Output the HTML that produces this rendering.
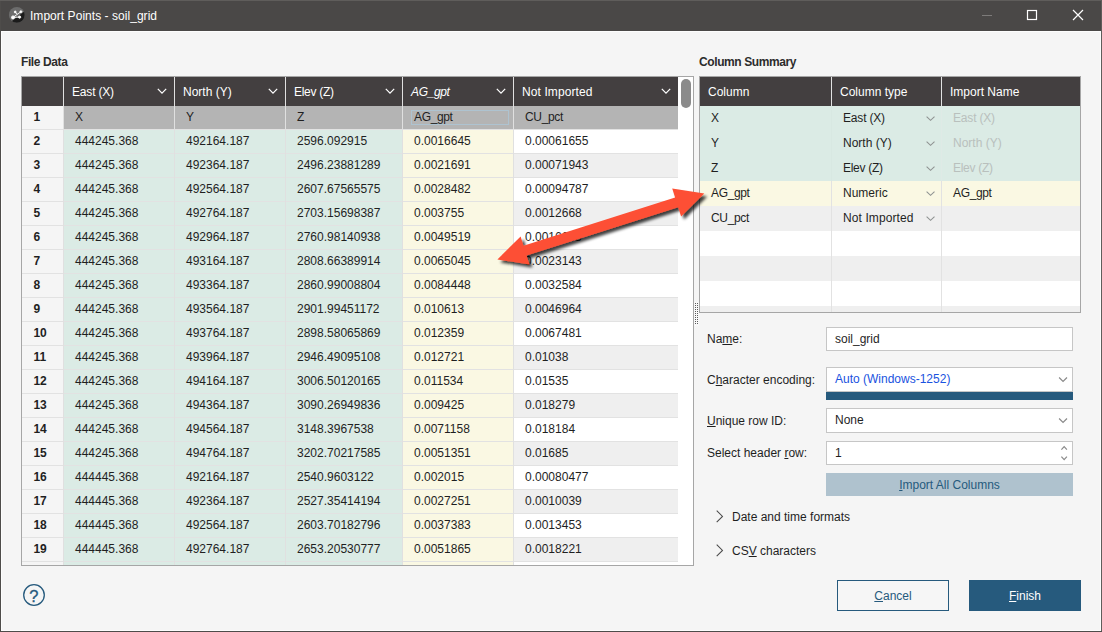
<!DOCTYPE html>
<html lang="en"><head><meta charset="utf-8"><title>Import Points - soil_grid</title>
<style>
*{box-sizing:border-box;margin:0;padding:0}
html,body{width:1102px;height:632px;overflow:hidden;background:#f5f5f5}
body{font-family:"Liberation Sans",sans-serif;font-size:12px;color:#1f1f1f;position:relative}
.abs,.abs>*{position:absolute}
#win{position:absolute;left:0;top:0;width:1102px;height:632px;background:#f5f5f5;overflow:hidden}
.bd{position:absolute;background:#5f5d5b}
#title{position:absolute;left:0;top:0;width:1102px;height:31px;background:#4a4847;color:#fff}
#title .t{position:absolute;left:30px;top:8px;font-size:12px;line-height:16px;white-space:nowrap;letter-spacing:0.04px}
.lbl{position:absolute;white-space:nowrap;line-height:16px}
.b{font-weight:bold}
.hb{letter-spacing:-0.4px;color:#2c2c2c}
#lt{position:absolute;left:21px;top:76px;width:673px;height:490px;border:1px solid #a6a6a6;background:#fff;overflow:hidden}
#rt{position:absolute;left:699px;top:76px;width:382px;height:237px;border:1px solid #a6a6a6;background:#fff;overflow:hidden}
.hd{position:absolute;background:#433f40;color:#fff}
.c{position:absolute;white-space:nowrap;overflow:hidden;line-height:23px;height:24px;border-bottom:1px solid #e2e2e2}
.v{position:absolute;width:1px;background:#e0e0e0}
.chev{position:absolute}
</style></head><body>
<div id="win">
<div id="title">
<svg style="position:absolute;left:8px;top:6px" width="18" height="18" viewBox="0 0 18 18"><defs><clipPath id="cc"><circle cx="8.8" cy="8.9" r="7.9"/></clipPath></defs><circle cx="8.8" cy="8.9" r="7.9" fill="#6c6c6c"/><path d="M2 16.5L19 3.5V19H2Z" fill="#1b1b1b" clip-path="url(#cc)"/><g stroke="#fff" stroke-width="0.9" fill="#fff"><path d="M5 11.4L12.9 5.7M5 11.4L11.6 11.1M7.2 6L9.3 8.3" fill="none"/><circle cx="5" cy="11.4" r="1.5"/><circle cx="11.6" cy="11.1" r="1.15"/><circle cx="12.9" cy="5.7" r="0.95"/><circle cx="7.2" cy="6" r="0.95"/></g></svg>
<div class="t">Import Points - soil_grid</div>
<svg style="position:absolute;left:975px;top:0" width="127" height="31" viewBox="0 0 127 31" fill="none"><path d="M7 15.5H17" stroke="#7d7b7a" stroke-width="1"/><rect x="52.5" y="10.5" width="9" height="9" stroke="#fff" stroke-width="1.2"/><path d="M98 10L108 20M108 10L98 20" stroke="#fff" stroke-width="1.2"/></svg>
</div>
<div class="lbl b hb" style="left:21px;top:54px">File Data</div>
<div class="lbl b hb" style="left:699px;top:54px">Column Summary</div>
<div id="lt">
<div class="hd" style="left:0;top:0;width:656px;height:29px"></div>
<div class="lbl" style="left:50px;top:7px;color:#fff;letter-spacing:-0.18px;">East (X)</div>
<svg class="chev" style="left:135.0px;top:11.4px" width="10" height="6" viewBox="0 0 10 6" fill="none"><path d="M0.8 0.9L5 5.1L9.2 0.9" stroke="#fff" stroke-width="1.25"/></svg>
<div class="lbl" style="left:161px;top:7px;color:#fff;">North (Y)</div>
<svg class="chev" style="left:246.0px;top:11.4px" width="10" height="6" viewBox="0 0 10 6" fill="none"><path d="M0.8 0.9L5 5.1L9.2 0.9" stroke="#fff" stroke-width="1.25"/></svg>
<div class="lbl" style="left:272px;top:7px;color:#fff;letter-spacing:-0.28px;">Elev (Z)</div>
<svg class="chev" style="left:363.0px;top:11.4px" width="10" height="6" viewBox="0 0 10 6" fill="none"><path d="M0.8 0.9L5 5.1L9.2 0.9" stroke="#fff" stroke-width="1.25"/></svg>
<div class="lbl" style="left:389px;top:7px;color:#fff;font-style:italic;letter-spacing:-0.35px;">AG_gpt</div>
<svg class="chev" style="left:474.0px;top:11.4px" width="10" height="6" viewBox="0 0 10 6" fill="none"><path d="M0.8 0.9L5 5.1L9.2 0.9" stroke="#fff" stroke-width="1.25"/></svg>
<div class="lbl" style="left:500px;top:7px;color:#fff;letter-spacing:0.1px;">Not Imported</div>
<svg class="chev" style="left:639.0px;top:11.4px" width="10" height="6" viewBox="0 0 10 6" fill="none"><path d="M0.8 0.9L5 5.1L9.2 0.9" stroke="#fff" stroke-width="1.25"/></svg>
<div class="c b" style="left:0;top:29px;width:42px;background:#f5f5f5;padding-left:11.4px">1</div>
<div class="c" style="left:42px;top:29px;width:111px;background:#b4b4b4;padding-left:11px;">X</div>
<div class="c" style="left:153px;top:29px;width:111px;background:#b4b4b4;padding-left:11px;">Y</div>
<div class="c" style="left:264px;top:29px;width:117px;background:#b4b4b4;padding-left:11px;">Z</div>
<div class="c" style="left:381px;top:29px;width:111px;background:#b4b4b4;padding-left:11px;letter-spacing:-0.35px;">AG_gpt</div>
<div class="c" style="left:492px;top:29px;width:164px;background:#b4b4b4;padding-left:11px;letter-spacing:-0.35px;">CU_pct</div>
<div class="c b" style="left:0;top:53px;width:42px;background:#f5f5f5;padding-left:11.4px">2</div>
<div class="c" style="left:42px;top:53px;width:111px;background:#dbebe5;padding-left:11px;">444245.368</div>
<div class="c" style="left:153px;top:53px;width:111px;background:#dbebe5;padding-left:11px;">492164.187</div>
<div class="c" style="left:264px;top:53px;width:117px;background:#dbebe5;padding-left:11px;">2596.092915</div>
<div class="c" style="left:381px;top:53px;width:111px;background:#faf8e3;padding-left:11px;">0.0016645</div>
<div class="c" style="left:492px;top:53px;width:164px;background:#ffffff;padding-left:11px;">0.00061655</div>
<div class="c b" style="left:0;top:77px;width:42px;background:#f5f5f5;padding-left:11.4px">3</div>
<div class="c" style="left:42px;top:77px;width:111px;background:#dbebe5;padding-left:11px;">444245.368</div>
<div class="c" style="left:153px;top:77px;width:111px;background:#dbebe5;padding-left:11px;">492364.187</div>
<div class="c" style="left:264px;top:77px;width:117px;background:#dbebe5;padding-left:11px;">2496.23881289</div>
<div class="c" style="left:381px;top:77px;width:111px;background:#faf8e3;padding-left:11px;">0.0021691</div>
<div class="c" style="left:492px;top:77px;width:164px;background:#efefef;padding-left:11px;">0.00071943</div>
<div class="c b" style="left:0;top:101px;width:42px;background:#f5f5f5;padding-left:11.4px">4</div>
<div class="c" style="left:42px;top:101px;width:111px;background:#dbebe5;padding-left:11px;">444245.368</div>
<div class="c" style="left:153px;top:101px;width:111px;background:#dbebe5;padding-left:11px;">492564.187</div>
<div class="c" style="left:264px;top:101px;width:117px;background:#dbebe5;padding-left:11px;">2607.67565575</div>
<div class="c" style="left:381px;top:101px;width:111px;background:#faf8e3;padding-left:11px;">0.0028482</div>
<div class="c" style="left:492px;top:101px;width:164px;background:#ffffff;padding-left:11px;">0.00094787</div>
<div class="c b" style="left:0;top:125px;width:42px;background:#f5f5f5;padding-left:11.4px">5</div>
<div class="c" style="left:42px;top:125px;width:111px;background:#dbebe5;padding-left:11px;">444245.368</div>
<div class="c" style="left:153px;top:125px;width:111px;background:#dbebe5;padding-left:11px;">492764.187</div>
<div class="c" style="left:264px;top:125px;width:117px;background:#dbebe5;padding-left:11px;">2703.15698387</div>
<div class="c" style="left:381px;top:125px;width:111px;background:#faf8e3;padding-left:11px;">0.003755</div>
<div class="c" style="left:492px;top:125px;width:164px;background:#efefef;padding-left:11px;">0.0012668</div>
<div class="c b" style="left:0;top:149px;width:42px;background:#f5f5f5;padding-left:11.4px">6</div>
<div class="c" style="left:42px;top:149px;width:111px;background:#dbebe5;padding-left:11px;">444245.368</div>
<div class="c" style="left:153px;top:149px;width:111px;background:#dbebe5;padding-left:11px;">492964.187</div>
<div class="c" style="left:264px;top:149px;width:117px;background:#dbebe5;padding-left:11px;">2760.98140938</div>
<div class="c" style="left:381px;top:149px;width:111px;background:#faf8e3;padding-left:11px;">0.0049519</div>
<div class="c" style="left:492px;top:149px;width:164px;background:#ffffff;padding-left:11px;">0.0016648</div>
<div class="c b" style="left:0;top:173px;width:42px;background:#f5f5f5;padding-left:11.4px">7</div>
<div class="c" style="left:42px;top:173px;width:111px;background:#dbebe5;padding-left:11px;">444245.368</div>
<div class="c" style="left:153px;top:173px;width:111px;background:#dbebe5;padding-left:11px;">493164.187</div>
<div class="c" style="left:264px;top:173px;width:117px;background:#dbebe5;padding-left:11px;">2808.66389914</div>
<div class="c" style="left:381px;top:173px;width:111px;background:#faf8e3;padding-left:11px;">0.0065045</div>
<div class="c" style="left:492px;top:173px;width:164px;background:#efefef;padding-left:11px;">0.0023143</div>
<div class="c b" style="left:0;top:197px;width:42px;background:#f5f5f5;padding-left:11.4px">8</div>
<div class="c" style="left:42px;top:197px;width:111px;background:#dbebe5;padding-left:11px;">444245.368</div>
<div class="c" style="left:153px;top:197px;width:111px;background:#dbebe5;padding-left:11px;">493364.187</div>
<div class="c" style="left:264px;top:197px;width:117px;background:#dbebe5;padding-left:11px;">2860.99008804</div>
<div class="c" style="left:381px;top:197px;width:111px;background:#faf8e3;padding-left:11px;">0.0084448</div>
<div class="c" style="left:492px;top:197px;width:164px;background:#ffffff;padding-left:11px;">0.0032584</div>
<div class="c b" style="left:0;top:221px;width:42px;background:#f5f5f5;padding-left:11.4px">9</div>
<div class="c" style="left:42px;top:221px;width:111px;background:#dbebe5;padding-left:11px;">444245.368</div>
<div class="c" style="left:153px;top:221px;width:111px;background:#dbebe5;padding-left:11px;">493564.187</div>
<div class="c" style="left:264px;top:221px;width:117px;background:#dbebe5;padding-left:11px;">2901.99451172</div>
<div class="c" style="left:381px;top:221px;width:111px;background:#faf8e3;padding-left:11px;">0.010613</div>
<div class="c" style="left:492px;top:221px;width:164px;background:#efefef;padding-left:11px;">0.0046964</div>
<div class="c b" style="left:0;top:245px;width:42px;background:#f5f5f5;padding-left:11.4px">10</div>
<div class="c" style="left:42px;top:245px;width:111px;background:#dbebe5;padding-left:11px;">444245.368</div>
<div class="c" style="left:153px;top:245px;width:111px;background:#dbebe5;padding-left:11px;">493764.187</div>
<div class="c" style="left:264px;top:245px;width:117px;background:#dbebe5;padding-left:11px;">2898.58065869</div>
<div class="c" style="left:381px;top:245px;width:111px;background:#faf8e3;padding-left:11px;">0.012359</div>
<div class="c" style="left:492px;top:245px;width:164px;background:#ffffff;padding-left:11px;">0.0067481</div>
<div class="c b" style="left:0;top:269px;width:42px;background:#f5f5f5;padding-left:11.4px">11</div>
<div class="c" style="left:42px;top:269px;width:111px;background:#dbebe5;padding-left:11px;">444245.368</div>
<div class="c" style="left:153px;top:269px;width:111px;background:#dbebe5;padding-left:11px;">493964.187</div>
<div class="c" style="left:264px;top:269px;width:117px;background:#dbebe5;padding-left:11px;">2946.49095108</div>
<div class="c" style="left:381px;top:269px;width:111px;background:#faf8e3;padding-left:11px;">0.012721</div>
<div class="c" style="left:492px;top:269px;width:164px;background:#efefef;padding-left:11px;">0.01038</div>
<div class="c b" style="left:0;top:293px;width:42px;background:#f5f5f5;padding-left:11.4px">12</div>
<div class="c" style="left:42px;top:293px;width:111px;background:#dbebe5;padding-left:11px;">444245.368</div>
<div class="c" style="left:153px;top:293px;width:111px;background:#dbebe5;padding-left:11px;">494164.187</div>
<div class="c" style="left:264px;top:293px;width:117px;background:#dbebe5;padding-left:11px;">3006.50120165</div>
<div class="c" style="left:381px;top:293px;width:111px;background:#faf8e3;padding-left:11px;">0.011534</div>
<div class="c" style="left:492px;top:293px;width:164px;background:#ffffff;padding-left:11px;">0.01535</div>
<div class="c b" style="left:0;top:317px;width:42px;background:#f5f5f5;padding-left:11.4px">13</div>
<div class="c" style="left:42px;top:317px;width:111px;background:#dbebe5;padding-left:11px;">444245.368</div>
<div class="c" style="left:153px;top:317px;width:111px;background:#dbebe5;padding-left:11px;">494364.187</div>
<div class="c" style="left:264px;top:317px;width:117px;background:#dbebe5;padding-left:11px;">3090.26949836</div>
<div class="c" style="left:381px;top:317px;width:111px;background:#faf8e3;padding-left:11px;">0.009425</div>
<div class="c" style="left:492px;top:317px;width:164px;background:#efefef;padding-left:11px;">0.018279</div>
<div class="c b" style="left:0;top:341px;width:42px;background:#f5f5f5;padding-left:11.4px">14</div>
<div class="c" style="left:42px;top:341px;width:111px;background:#dbebe5;padding-left:11px;">444245.368</div>
<div class="c" style="left:153px;top:341px;width:111px;background:#dbebe5;padding-left:11px;">494564.187</div>
<div class="c" style="left:264px;top:341px;width:117px;background:#dbebe5;padding-left:11px;">3148.3967538</div>
<div class="c" style="left:381px;top:341px;width:111px;background:#faf8e3;padding-left:11px;">0.0071158</div>
<div class="c" style="left:492px;top:341px;width:164px;background:#ffffff;padding-left:11px;">0.018184</div>
<div class="c b" style="left:0;top:365px;width:42px;background:#f5f5f5;padding-left:11.4px">15</div>
<div class="c" style="left:42px;top:365px;width:111px;background:#dbebe5;padding-left:11px;">444245.368</div>
<div class="c" style="left:153px;top:365px;width:111px;background:#dbebe5;padding-left:11px;">494764.187</div>
<div class="c" style="left:264px;top:365px;width:117px;background:#dbebe5;padding-left:11px;">3202.70217585</div>
<div class="c" style="left:381px;top:365px;width:111px;background:#faf8e3;padding-left:11px;">0.0051351</div>
<div class="c" style="left:492px;top:365px;width:164px;background:#efefef;padding-left:11px;">0.01685</div>
<div class="c b" style="left:0;top:389px;width:42px;background:#f5f5f5;padding-left:11.4px">16</div>
<div class="c" style="left:42px;top:389px;width:111px;background:#dbebe5;padding-left:11px;">444445.368</div>
<div class="c" style="left:153px;top:389px;width:111px;background:#dbebe5;padding-left:11px;">492164.187</div>
<div class="c" style="left:264px;top:389px;width:117px;background:#dbebe5;padding-left:11px;">2540.9603122</div>
<div class="c" style="left:381px;top:389px;width:111px;background:#faf8e3;padding-left:11px;">0.002015</div>
<div class="c" style="left:492px;top:389px;width:164px;background:#ffffff;padding-left:11px;">0.00080477</div>
<div class="c b" style="left:0;top:413px;width:42px;background:#f5f5f5;padding-left:11.4px">17</div>
<div class="c" style="left:42px;top:413px;width:111px;background:#dbebe5;padding-left:11px;">444445.368</div>
<div class="c" style="left:153px;top:413px;width:111px;background:#dbebe5;padding-left:11px;">492364.187</div>
<div class="c" style="left:264px;top:413px;width:117px;background:#dbebe5;padding-left:11px;">2527.35414194</div>
<div class="c" style="left:381px;top:413px;width:111px;background:#faf8e3;padding-left:11px;">0.0027251</div>
<div class="c" style="left:492px;top:413px;width:164px;background:#efefef;padding-left:11px;">0.0010039</div>
<div class="c b" style="left:0;top:437px;width:42px;background:#f5f5f5;padding-left:11.4px">18</div>
<div class="c" style="left:42px;top:437px;width:111px;background:#dbebe5;padding-left:11px;">444445.368</div>
<div class="c" style="left:153px;top:437px;width:111px;background:#dbebe5;padding-left:11px;">492564.187</div>
<div class="c" style="left:264px;top:437px;width:117px;background:#dbebe5;padding-left:11px;">2603.70182796</div>
<div class="c" style="left:381px;top:437px;width:111px;background:#faf8e3;padding-left:11px;">0.0037383</div>
<div class="c" style="left:492px;top:437px;width:164px;background:#ffffff;padding-left:11px;">0.0013453</div>
<div class="c b" style="left:0;top:461px;width:42px;background:#f5f5f5;padding-left:11.4px">19</div>
<div class="c" style="left:42px;top:461px;width:111px;background:#dbebe5;padding-left:11px;">444445.368</div>
<div class="c" style="left:153px;top:461px;width:111px;background:#dbebe5;padding-left:11px;">492764.187</div>
<div class="c" style="left:264px;top:461px;width:117px;background:#dbebe5;padding-left:11px;">2653.20530777</div>
<div class="c" style="left:381px;top:461px;width:111px;background:#faf8e3;padding-left:11px;">0.0051865</div>
<div class="c" style="left:492px;top:461px;width:164px;background:#efefef;padding-left:11px;">0.0018221</div>
<div class="c b" style="left:0;top:485px;width:42px;background:#f5f5f5;padding-left:11.4px"></div>
<div class="c" style="left:42px;top:485px;width:111px;background:#dbebe5;padding-left:11px;"></div>
<div class="c" style="left:153px;top:485px;width:111px;background:#dbebe5;padding-left:11px;"></div>
<div class="c" style="left:264px;top:485px;width:117px;background:#dbebe5;padding-left:11px;"></div>
<div class="c" style="left:381px;top:485px;width:111px;background:#faf8e3;padding-left:11px;"></div>
<div class="c" style="left:492px;top:485px;width:164px;background:#ffffff;padding-left:11px;"></div>
<div class="v" style="left:41px;top:0;height:500px"></div>
<div class="v" style="left:152px;top:0;height:500px"></div>
<div class="v" style="left:263px;top:0;height:500px"></div>
<div class="v" style="left:380px;top:0;height:500px"></div>
<div class="v" style="left:491px;top:0;height:500px"></div>
<div style="position:absolute;left:389px;top:33px;width:98px;height:15px;border:1px solid #aec3d0"></div>
<div style="position:absolute;left:656px;top:0;width:15px;height:500px;background:#fff"></div>
<div style="position:absolute;left:659px;top:2px;width:10px;height:29px;border-radius:5px;background:#8b8b8b"></div>
</div>
<div id="rt">
<div class="hd" style="left:0;top:0;width:380px;height:29px"></div>
<div class="lbl" style="left:8px;top:7px;color:#fff">Column</div>
<div class="lbl" style="left:140px;top:7px;color:#fff">Column type</div>
<div class="lbl" style="left:250px;top:7px;color:#fff">Import Name</div>
<div style="position:absolute;left:0;top:29px;width:380px;height:25px;background:#dbebe5"></div>
<div class="lbl" style="left:11px;top:33px;">X</div>
<div class="lbl" style="left:143px;top:33px;letter-spacing:-0.18px;">East (X)</div>
<svg class="chev" style="left:225px;top:38px" width="11" height="7" viewBox="0 0 11 7" fill="none"><path d="M1.6 1.6L5.55 5.3L9.5 1.6" stroke="#8f9392" stroke-width="1.1"/></svg>
<div class="lbl" style="left:253px;top:33px;color:#b9c0bd;letter-spacing:-0.18px;">East (X)</div>
<div style="position:absolute;left:0;top:54px;width:380px;height:25px;background:#dbebe5"></div>
<div class="lbl" style="left:11px;top:58px;">Y</div>
<div class="lbl" style="left:143px;top:58px;">North (Y)</div>
<svg class="chev" style="left:225px;top:63px" width="11" height="7" viewBox="0 0 11 7" fill="none"><path d="M1.6 1.6L5.55 5.3L9.5 1.6" stroke="#8f9392" stroke-width="1.1"/></svg>
<div class="lbl" style="left:253px;top:58px;color:#b9c0bd;">North (Y)</div>
<div style="position:absolute;left:0;top:79px;width:380px;height:25px;background:#dbebe5"></div>
<div class="lbl" style="left:11px;top:83px;">Z</div>
<div class="lbl" style="left:143px;top:83px;letter-spacing:-0.28px;">Elev (Z)</div>
<svg class="chev" style="left:225px;top:88px" width="11" height="7" viewBox="0 0 11 7" fill="none"><path d="M1.6 1.6L5.55 5.3L9.5 1.6" stroke="#8f9392" stroke-width="1.1"/></svg>
<div class="lbl" style="left:253px;top:83px;color:#b9c0bd;letter-spacing:-0.28px;">Elev (Z)</div>
<div style="position:absolute;left:0;top:104px;width:380px;height:25px;background:#faf8e3"></div>
<div class="lbl" style="left:11px;top:108px;letter-spacing:-0.35px;">AG_gpt</div>
<div class="lbl" style="left:143px;top:108px;">Numeric</div>
<svg class="chev" style="left:225px;top:113px" width="11" height="7" viewBox="0 0 11 7" fill="none"><path d="M1.6 1.6L5.55 5.3L9.5 1.6" stroke="#8f9392" stroke-width="1.1"/></svg>
<div class="lbl" style="left:253px;top:108px;color:#1f1f1f;letter-spacing:-0.35px;">AG_gpt</div>
<div style="position:absolute;left:0;top:129px;width:380px;height:25px;background:#efefef"></div>
<div class="lbl" style="left:11px;top:133px;letter-spacing:-0.35px;">CU_pct</div>
<div class="lbl" style="left:143px;top:133px;letter-spacing:0.1px;">Not Imported</div>
<svg class="chev" style="left:225px;top:138px" width="11" height="7" viewBox="0 0 11 7" fill="none"><path d="M1.6 1.6L5.55 5.3L9.5 1.6" stroke="#8f9392" stroke-width="1.1"/></svg>
<div style="position:absolute;left:0;top:154px;width:380px;height:25px;background:#ffffff"></div>
<div style="position:absolute;left:0;top:179px;width:380px;height:25px;background:#efefef"></div>
<div style="position:absolute;left:0;top:204px;width:380px;height:25px;background:#ffffff"></div>
<div style="position:absolute;left:0;top:229px;width:380px;height:25px;background:#efefef"></div>
<div class="v" style="left:131px;top:0;height:300px;background:#e2e2e2"></div>
<div class="v" style="left:131px;top:29px;height:75px;background:#d8e8e2"></div>
<div class="v" style="left:241px;top:0;height:300px;background:#e2e2e2"></div>
<div class="v" style="left:241px;top:29px;height:75px;background:#dfeae6"></div>
</div>
<svg style="position:absolute;left:694px;top:302px" width="5" height="24" viewBox="0 0 5 24" shape-rendering="crispEdges"><rect x="0" y="0" width="5" height="24" fill="#f9f9f9"/><g fill="#5c5c5c"><rect x="1" y="1" width="1" height="1"/><rect x="3" y="1" width="1" height="1"/><rect x="1" y="3" width="1" height="1"/><rect x="3" y="3" width="1" height="1"/><rect x="1" y="5" width="1" height="1"/><rect x="3" y="5" width="1" height="1"/><rect x="1" y="7" width="1" height="1"/><rect x="3" y="7" width="1" height="1"/><rect x="1" y="9" width="1" height="1"/><rect x="3" y="9" width="1" height="1"/><rect x="1" y="11" width="1" height="1"/><rect x="3" y="11" width="1" height="1"/><rect x="1" y="13" width="1" height="1"/><rect x="3" y="13" width="1" height="1"/><rect x="1" y="15" width="1" height="1"/><rect x="3" y="15" width="1" height="1"/><rect x="1" y="17" width="1" height="1"/><rect x="3" y="17" width="1" height="1"/><rect x="1" y="19" width="1" height="1"/><rect x="3" y="19" width="1" height="1"/><rect x="1" y="21" width="1" height="1"/><rect x="3" y="21" width="1" height="1"/></g></svg>
<div class="lbl" style="left:707px;top:331px">Na<u>m</u>e:</div>
<div style="position:absolute;left:826px;top:327px;width:247px;height:24px;background:#fff;border:1px solid #c6c6c6;"><div class="lbl" style="left:8px;top:3px;color:#1f1f1f">soil_grid</div></div>
<div class="lbl" style="left:707px;top:372px">C<u>h</u>aracter encoding:</div>
<div style="position:absolute;left:826px;top:367px;width:247px;height:25px;background:#fff;border:1px solid #c6c6c6;"><div class="lbl" style="left:8px;top:3px;color:#1a53e0">Auto (Windows-1252)</div></div>
<div style="position:absolute;left:826px;top:392px;width:247px;height:8px;background:#265a7d"></div>
<div class="lbl" style="left:707px;top:413px"><u>U</u>nique row ID:</div>
<div style="position:absolute;left:826px;top:408px;width:247px;height:25px;background:#fff;border:1px solid #c6c6c6;"><div class="lbl" style="left:8px;top:3px;color:#1f1f1f">None</div></div>
<div class="lbl" style="left:707px;top:445px">Select header <u>r</u>ow:</div>
<div style="position:absolute;left:826px;top:441px;width:247px;height:24px;background:#fff;border:1px solid #c6c6c6;"><div class="lbl" style="left:8px;top:3px;color:#1f1f1f">1</div></div>
<svg class="chev" style="left:1058.3px;top:377px" width="11" height="7" viewBox="0 0 11 7" fill="none"><path d="M1.1 0.5L5.05 4.5L9 0.5" stroke="#8a8a8a" stroke-width="1.2"/></svg>
<svg class="chev" style="left:1058.3px;top:418px" width="11" height="7" viewBox="0 0 11 7" fill="none"><path d="M1.1 0.5L5.05 4.5L9 0.5" stroke="#8a8a8a" stroke-width="1.2"/></svg>
<svg class="chev" style="left:1058px;top:445px" width="12" height="17" viewBox="0 0 12 17" fill="none"><path d="M3.4 4.7L6.15 1.7L8.9 4.7M3.4 11.7L6.15 14.7L8.9 11.7" stroke="#8a8a8a" stroke-width="1.2"/></svg>
<div style="position:absolute;left:826px;top:473px;width:247px;height:23px;background:#afc2ce;color:#265a7d;text-align:center;line-height:25px"><u>I</u>mport All Columns</div>
<svg class="chev" style="left:716.2px;top:510.4px" width="8" height="13" viewBox="0 0 8 13" fill="none"><path d="M0.7 0.6L6.5 6.4L0.7 12.2" stroke="#4a4a4a" stroke-width="1.05"/></svg>
<div class="lbl" style="left:732px;top:509px">Date and time formats</div>
<svg class="chev" style="left:716.2px;top:544.4px" width="8" height="13" viewBox="0 0 8 13" fill="none"><path d="M0.7 0.6L6.5 6.4L0.7 12.2" stroke="#4a4a4a" stroke-width="1.05"/></svg>
<div class="lbl" style="left:732px;top:543px">CS<u>V</u> characters</div>
<div style="position:absolute;left:837px;top:580px;width:112px;height:31px;border:1px solid #265a7d;background:#f6f6f6;color:#265a7d;text-align:center;line-height:31px"><u>C</u>ancel</div>
<div style="position:absolute;left:969px;top:580px;width:112px;height:31px;background:#265a7d;color:#fff;text-align:center;line-height:33px"><u>F</u>inish</div>
<svg style="position:absolute;left:22.2px;top:582.8px" width="24" height="24" viewBox="0 0 24 24" fill="none"><circle cx="12" cy="12" r="10.3" stroke="#265a7d" stroke-width="1.3"/></svg>
<div class="lbl" style="left:29.2px;top:585.5px;font-size:16.5px;color:#265a7d;line-height:20px;-webkit-text-stroke:0.3px #265a7d">?</div>
<svg style="position:absolute;left:470px;top:170px" width="260" height="120" viewBox="470 170 260 120">
<defs><filter id="sh" x="-10%" y="-20%" width="120%" height="150%"><feGaussianBlur in="SourceAlpha" stdDeviation="1.6"/><feOffset dx="2.5" dy="3"/><feComponentTransfer><feFuncA type="linear" slope="0.75"/></feComponentTransfer><feMerge><feMergeNode/><feMergeNode in="SourceGraphic"/></feMerge></filter></defs>
<polygon filter="url(#sh)" fill="#fd5034" points="497.4,259.4 520.6,236.6 523.5,245.8 675.1,197.5 672.2,188.4 704.3,193.6 681.1,216.4 678.2,207.2 526.6,255.5 529.5,264.6"/></svg>
<div style="position:absolute;left:1px;top:31px;width:1100px;height:600px;border:1px solid #fdfdfd;pointer-events:none"></div>
<div class="bd" style="left:0;top:0;width:1px;height:632px;background:#4e4c4a"></div><div class="bd" style="left:1101px;top:0;width:1px;height:632px"></div><div class="bd" style="left:0;top:631px;width:1102px;height:1px;background:#4e4c4a"></div><div class="bd" style="left:0;top:0;width:1102px;height:1px"></div>
</div></body></html>
